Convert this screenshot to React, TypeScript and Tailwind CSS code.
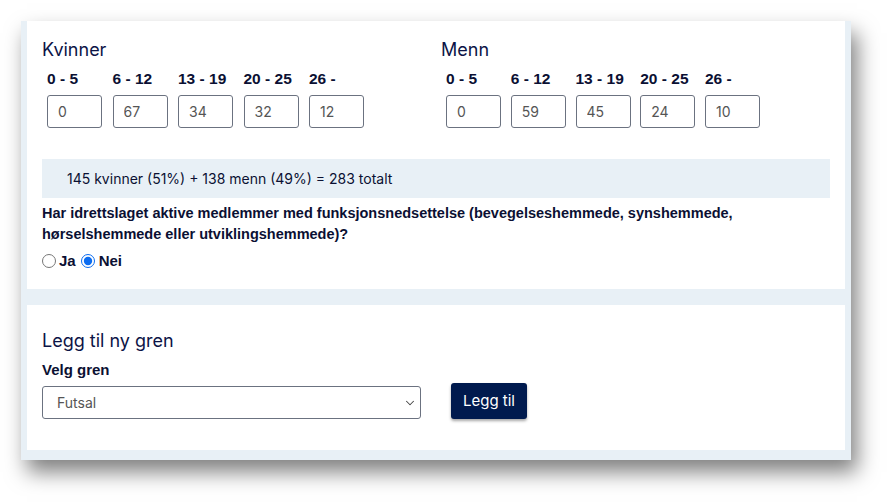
import { ChevronDown } from "lucide-react";

const KVINNER = [
  { label: "0 - 5", value: 0 },
  { label: "6 - 12", value: 67 },
  { label: "13 - 19", value: 34 },
  { label: "20 - 25", value: 32 },
  { label: "26 -", value: 12 },
];

const MENN = [
  { label: "0 - 5", value: 0 },
  { label: "6 - 12", value: 59 },
  { label: "13 - 19", value: 45 },
  { label: "20 - 25", value: 24 },
  { label: "26 -", value: 10 },
];

const INTER = "font-['Inter','Noto_Sans',sans-serif]";
const ARIAL = "font-['Liberation_Sans',Arial,sans-serif]";

function AgeGroup({
  title,
  rows,
  gap,
}: {
  title: string;
  rows: { label: string; value: number }[];
  gap: string;
}) {
  return (
    <div>
      <h2 className={`${INTER} text-[18px] leading-[27px] text-[#0c1446]`}>{title}</h2>
      <div className={`mt-[6px] flex pl-[5px] ${gap}`}>
        {rows.map((r) => (
          <div key={r.label} className="w-[55px]">
            <div className={`${ARIAL} text-[15.5px] font-bold leading-[20px] text-[#0b1033] whitespace-nowrap`}>
              {r.label}
            </div>
            <input
              readOnly
              value={r.value}
              className={`${INTER} mt-[6px] block h-[33px] w-[55px] rounded-[3px] border border-[#6b7280] pl-[10px] text-[14px] text-[#555] outline-none`}
            />
          </div>
        ))}
      </div>
    </div>
  );
}

export default function App() {
  return (
    <div className="min-h-[502px] bg-white pl-[21px] pt-[21px]">
      <div className="w-[830px] bg-[#e8f0f6] px-[6px] pb-[10px] shadow-[6px_12px_20px_rgba(0,0,0,0.5)]">
        {/* Aldersfordeling */}
        <div className="h-[268px] bg-white px-[15px] pt-[15px]">
          <div className="grid grid-cols-[389px_389px] gap-[10px]">
            <AgeGroup title="Kvinner" rows={KVINNER} gap="gap-[10.5px]" />
            <AgeGroup title="Menn" rows={MENN} gap="gap-[9.75px]" />
          </div>

          <div className={`${INTER} mt-[31px] flex h-[39px] w-[788px] items-center bg-[#e8f0f6] pl-[25px] text-[14px] text-[#0b1033]`}>
            145 kvinner (51%) + 138 menn (49%) = 283 totalt
          </div>

          <p className={`${ARIAL} mt-[5px] text-[14.5px] font-bold leading-[21px] text-[#0b1033]`}>
            Har idrettslaget aktive medlemmer med funksjonsnedsettelse (bevegelseshemmede, synshemmede,
            <br />
            hørselshemmede eller utviklingshemmede)?
          </p>

          <div className={`${ARIAL} mt-[5px] flex items-center text-[15px] font-bold text-[#0b1033]`}>
            <label className="flex items-center">
              <input type="radio" name="funk" className="m-0 h-[14px] w-[14px] accent-[#0b6cf0]" />
              <span className="ml-[3px]">Ja</span>
            </label>
            <label className="ml-[5px] flex items-center">
              <input type="radio" name="funk" defaultChecked className="m-0 h-[14px] w-[14px] accent-[#0b6cf0]" />
              <span className="ml-[4px]">Nei</span>
            </label>
          </div>
        </div>

        {/* Legg til ny gren */}
        <div className="mt-[16px] h-[145px] bg-white px-[15px] pt-[22px]">
          <h2 className={`${INTER} text-[18px] leading-[27px] text-[#0c1446]`}>Legg til ny gren</h2>
          <div className={`${ARIAL} mt-[6px] text-[15px] font-bold leading-[20px] text-[#0b1033]`}>Velg gren</div>
          <div className="flex items-end gap-[30px]">
            <div className={`${INTER} mt-[6px] flex h-[33px] w-[379px] items-center justify-between rounded-[3px] border border-[#6b7280] pl-[14px] pr-[3px] text-[14px] text-[#555]`}>
              <span>Futsal</span>
              <ChevronDown size={14} strokeWidth={1.75} className="text-[#444]" />
            </div>
            <button
              className={`${INTER} h-[36px] w-[76px] rounded-[3px] bg-[#001a4e] text-[15px] font-normal text-white shadow-[0_2px_3px_rgba(0,0,0,0.35)]`}
            >
              Legg til
            </button>
          </div>
        </div>
      </div>
    </div>
  );
}
